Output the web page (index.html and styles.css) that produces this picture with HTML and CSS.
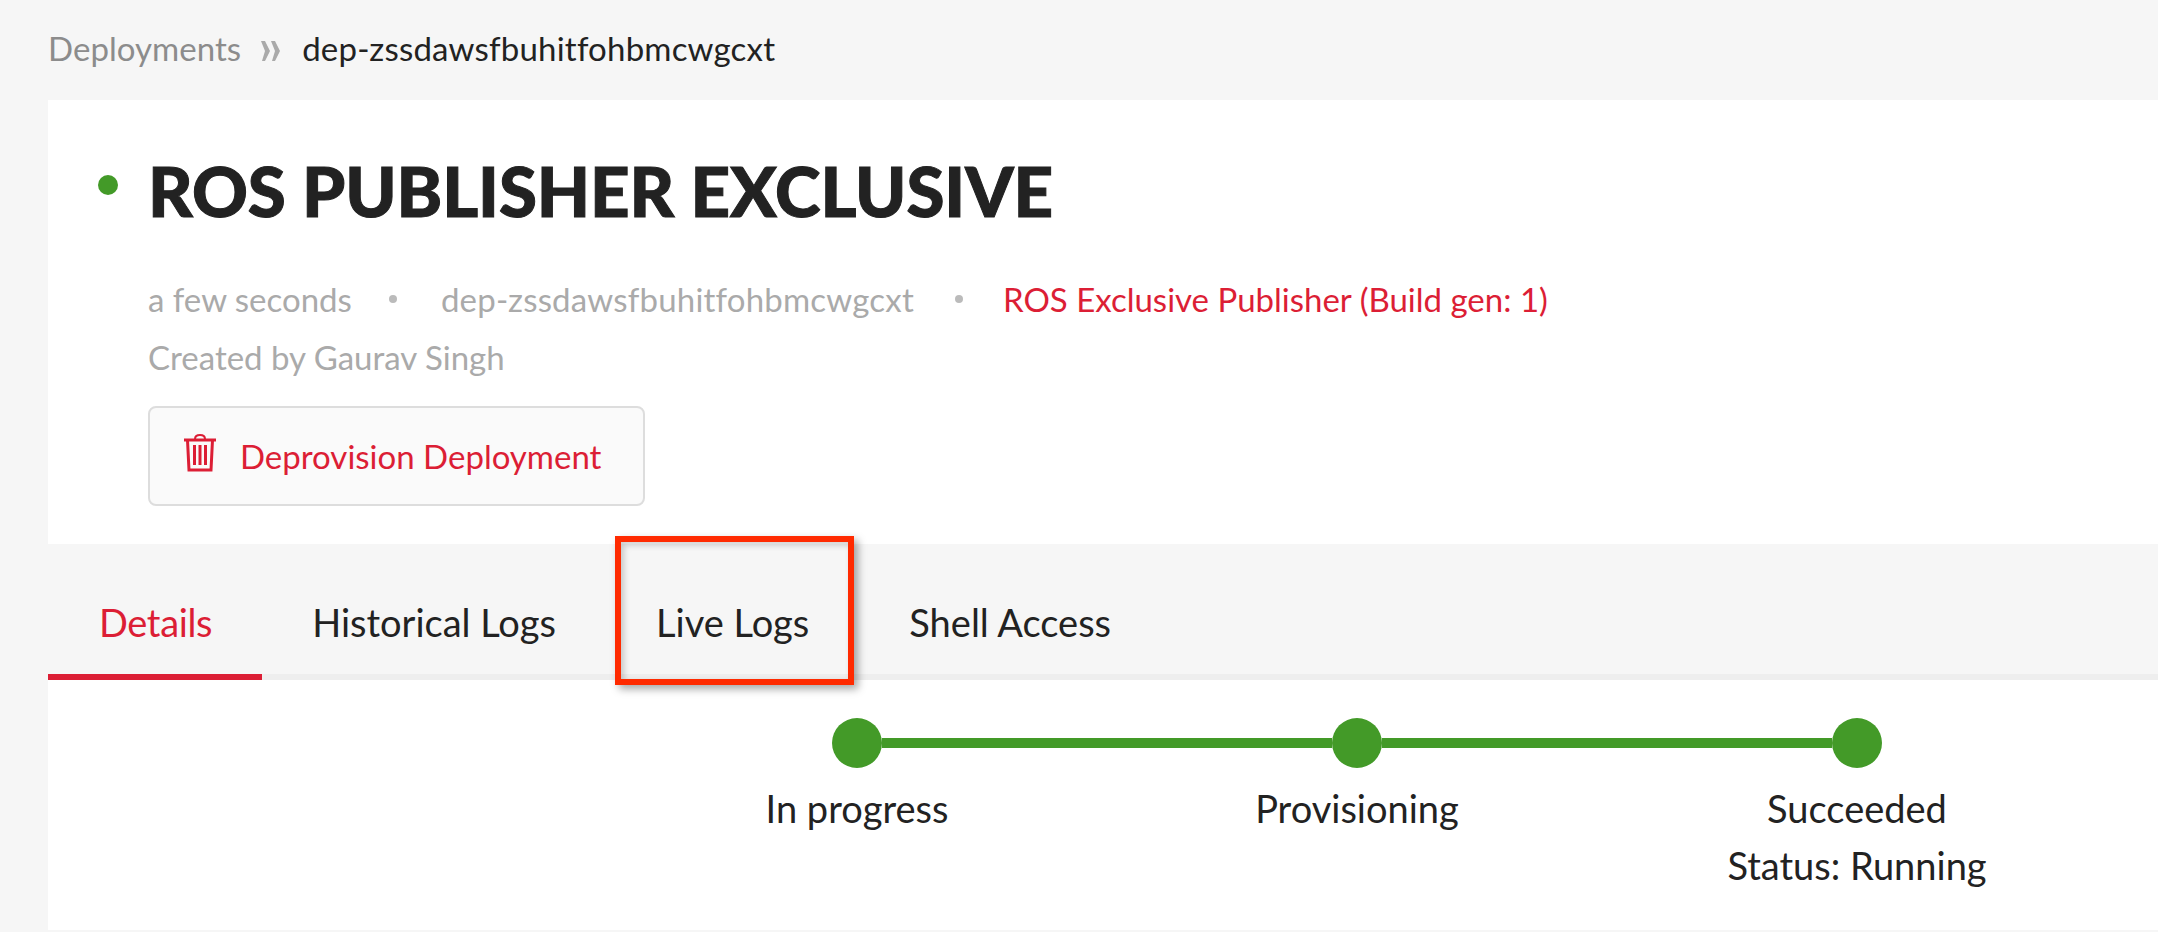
FILE: index.html
```html
<!DOCTYPE html>
<html lang="en">
<head>
<meta charset="utf-8">
<title>ROS Publisher Exclusive</title>
<link rel="stylesheet" href="styles.css">
</head>
<body>
<nav class="crumbs">
  <span class="crumb-parent">Deployments</span>
  <svg class="crumb-sep" viewBox="0 0 20 20" width="20" height="20"><path d="M0 0h4l5 10-5 10H1l3-10zM10 0h4l5 10-5 10h-3l3-10z"/></svg>
  <span class="crumb-current">dep-zssdawsfbuhitfohbmcwgcxt</span>
</nav>
<header class="card">
  <div class="title-row">
    <span class="status-dot"></span>
    <h1 class="title">ROS PUBLISHER EXCLUSIVE</h1>
  </div>
  <div class="meta">
    <span class="meta-time">a few seconds</span>
    <span class="meta-dot"></span>
    <span class="meta-id">dep-zssdawsfbuhitfohbmcwgcxt</span>
    <span class="meta-dot"></span>
    <span class="meta-link">ROS Exclusive Publisher (Build gen: 1)</span>
  </div>
  <div class="creator">Created by Gaurav Singh</div>
  <button class="action">
    <svg class="trash" viewBox="0 0 32 40" width="32" height="40" fill="none" stroke="currentColor"><path stroke-width="3" d="M0 8h32"/><path stroke-width="2" d="M11 7q0-4 5-4t5 4"/><path stroke-width="3" d="M3.500 8l1.500 30h22l1.500-30"/><path stroke-width="3" d="M10.500 13v20M16 13v20M21.500 13v20"/></svg>
    <span>Deprovision Deployment</span>
  </button>
</header>
<div class="tabs">
  <a class="tab tab-active">Details</a>
  <a class="tab">Historical Logs</a>
  <a class="tab">Live Logs</a>
  <a class="tab">Shell Access</a>
  <div class="highlight"></div>
</div>
<section class="panel">
  <div class="stepper">
    <div class="step">
      <div class="track"><span class="seg seg-off"></span><span class="dot"></span><span class="seg"></span></div>
      <div class="label">In progress</div>
    </div>
    <div class="step">
      <div class="track"><span class="seg"></span><span class="dot"></span><span class="seg"></span></div>
      <div class="label">Provisioning</div>
    </div>
    <div class="step">
      <div class="track"><span class="seg"></span><span class="dot"></span><span class="seg seg-off"></span></div>
      <div class="label">Succeeded</div>
      <div class="label label-sub">Status: Running</div>
    </div>
  </div>
</section>
</body>
</html>
```
FILE: styles.css
```css
* { box-sizing: border-box; }
html, body { margin: 0; height: 100%; }
body {
  background: #f6f6f6;
  color: #222;
  font-family: "Lato", "Liberation Sans", sans-serif;
  font-size: 33px;
  overflow: hidden;
  padding-left: 48px;
}
.crumbs {
  height: 100px;
  display: flex;
  align-items: center;
  padding-bottom: 4px;
}
.crumb-parent { color: #8c8c8c; letter-spacing: .05px; }
.crumb-sep { fill: #aaa; margin: 6px 21px 0 20px; flex: none; }
.crumb-current { color: #222; letter-spacing: .2px; }
.card {
  background: #fff;
  height: 444px;
  padding: 46px 0 0 100px;
}
.title-row { position: relative; display: flex; align-items: center; height: 90px; }
.status-dot {
  position: absolute;
  left: -50px;
  top: 29px;
  width: 20px;
  height: 20px;
  border-radius: 50%;
  background: #439a28;
}
.title {
  margin: 0;
  font-size: 69px;
  font-weight: 900;
  line-height: 90px;
  color: #222;
  letter-spacing: -.1px;
  white-space: nowrap;
  -webkit-text-stroke: 1px #222;
}
.meta {
  display: flex;
  align-items: center;
  margin-top: 41px;
  height: 44px;
  color: #aaa;
  white-space: nowrap;
}
.meta-id { letter-spacing: .2px; margin: 0 4px; }
.meta-dot {
  width: 8px;
  height: 8px;
  border-radius: 50%;
  background: #bbb;
  margin: 0 40px 0 37px;
}
.meta-link { color: #dc1e35; }
.creator { color: #aaa; margin-top: 14px; height: 44px; line-height: 44px; }
.action {
  display: flex;
  align-items: center;
  gap: 24px;
  width: 497px;
  height: 100px;
  margin-top: 27px;
  padding: 0 0 0 34px;
  background: #fafafa;
  border: 2px solid #ddd;
  border-radius: 8px;
  color: #dc1e35;
  font: inherit;
}
.trash { flex: none; margin-top: -8px; }
.tabs {
  position: relative;
  display: flex;
  height: 136px;
  border-bottom: 6px solid #eee;
  font-size: 38px;
}
.tab {
  display: flex;
  align-items: center;
  padding: 26px 50px 0;
  height: 136px;
  border-bottom: 6px solid transparent;
  color: #222;
  white-space: nowrap;
}
.tab-active {
  color: #dc1e35;
  border-bottom-color: #dc1e35;
  letter-spacing: -.35px;
  padding: 26px 50px 0 51px;
}
.highlight {
  position: absolute;
  left: 567px;
  top: -8px;
  width: 239px;
  height: 149px;
  border: 6px solid #ff2a00;
  box-shadow: 4px 4px 8px rgba(0,0,0,.35), inset 3px 3px 6px rgba(0,0,0,.2);
}
.panel {
  background: #fff;
  height: 250px;
  padding: 38px 0 0 559px;
}
.stepper { display: flex; }
.step { width: 500px; text-align: center; font-size: 38px; }
.track { display: flex; align-items: center; height: 50px; }
.seg { flex: 1; height: 10px; background: #439a28; }
.seg-off { background: transparent; }
.dot { width: 50px; height: 50px; border-radius: 50%; background: #439a28; flex: none; }
.label { line-height: 57px; margin-top: 12px; }
.label-sub { margin-top: 0; }
```
